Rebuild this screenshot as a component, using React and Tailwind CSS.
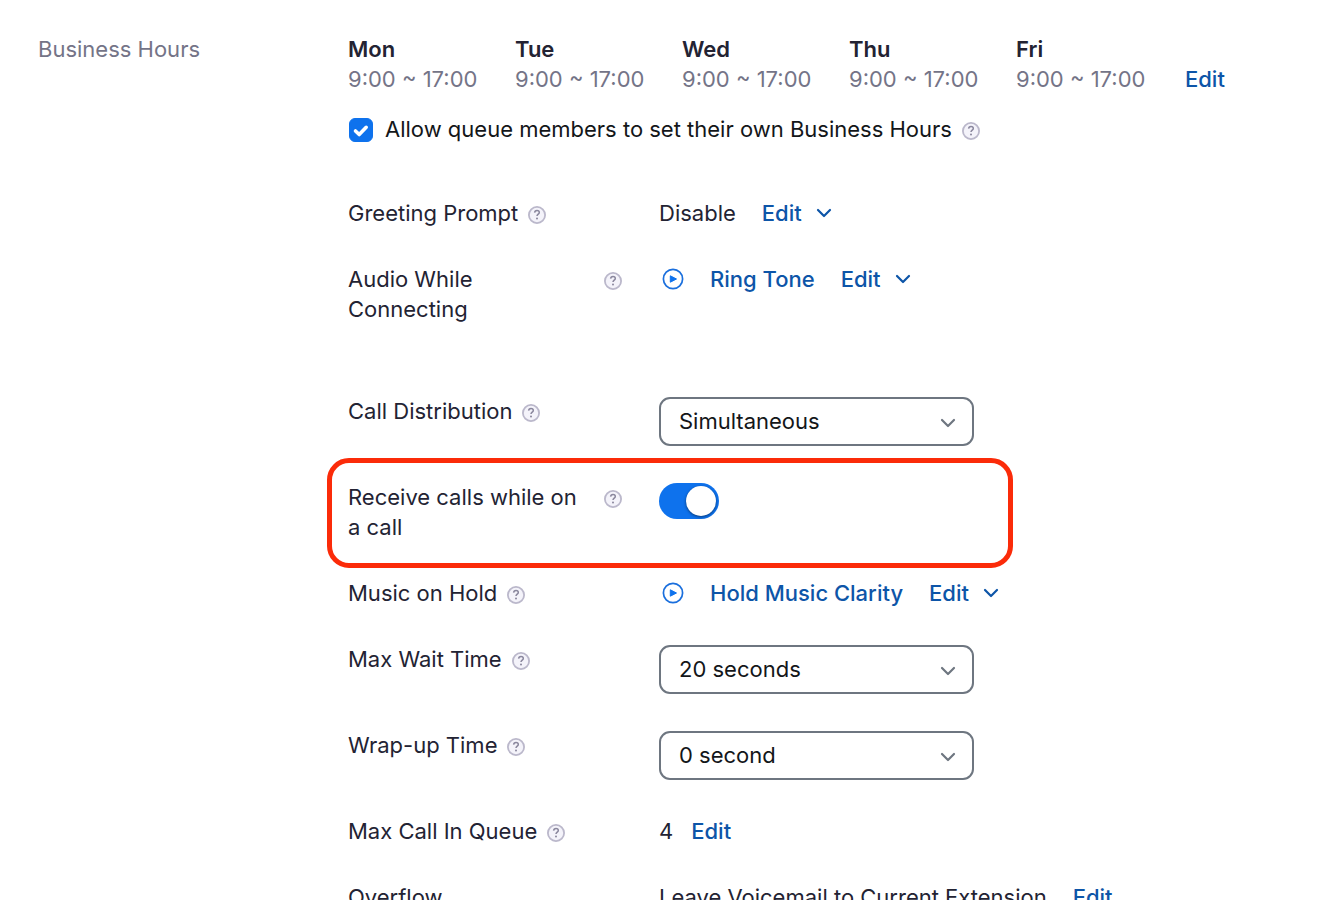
import { useId, useState } from "react";

const DAYS = ["Mon", "Tue", "Wed", "Thu", "Fri"];

function HelpIcon() {
  return (
    <button type="button" aria-label="Help" className="mt-2 h-[18px] w-[18px] shrink-0">
      <svg viewBox="0 0 18 18" className="block h-full w-full" fill="none">
        <circle cx="9" cy="9" r="8.1" fill="#f4f3fa" stroke="#bbb8cb" strokeWidth="1.8" />
        <path
          d="M6.6 6.6c.1-1.4 1.1-2.2 2.4-2.2 1.4 0 2.3.8 2.3 2 0 1.700-2.300 1.800-2.300 3.700"
          stroke="#8a879d"
          strokeWidth="1.5"
        />
        <circle cx="9" cy="12.6" r="1" fill="#8a879d" />
      </svg>
    </button>
  );
}

function Chevron({ className }) {
  return (
    <svg
      viewBox="0 0 16 10"
      className={className}
      fill="none"
      stroke="currentColor"
      strokeWidth="2.2"
      strokeLinecap="round"
      strokeLinejoin="round"
    >
      <path d="M2 2l6 6 6-6" />
    </svg>
  );
}

function PlayButton({ label }) {
  return (
    <button type="button" aria-label={`Play ${label}`} className="ml-[3px] mr-[26px] h-[22px] w-[22px] shrink-0">
      <svg viewBox="0 0 22 22" className="block h-full w-full" fill="none">
        <circle cx="11" cy="11" r="9.6" stroke="#1a6fdd" strokeWidth="1.7" />
        <path d="M8.3 7.8v6.4l6.2-3.2z" fill="#0e72ed" stroke="#0e72ed" strokeLinejoin="round" />
      </svg>
    </button>
  );
}

function EditMenu() {
  return (
    <button type="button" className="ml-[26px] flex items-center gap-[14px] font-medium text-[#0d55a8]">
      Edit
      <Chevron className="h-[10px] w-4" />
    </button>
  );
}

function Audio({ name }) {
  return (
    <div className="flex items-center">
      <PlayButton label={name} />
      <a href="#" className="font-medium text-[#0d55a8]">
        {name}
      </a>
      <EditMenu />
    </div>
  );
}

function Row({ label, htmlFor, help = true, className = "", children }) {
  return (
    <div className={`relative flex items-start ${className}`}>
      <div className="mr-[37px] flex w-[274px] shrink-0 items-start gap-[10px]">
        {htmlFor ? <label htmlFor={htmlFor}>{label}</label> : <span>{label}</span>}
        {help && <HelpIcon />}
      </div>
      {children}
    </div>
  );
}

function SelectRow({ label, options }) {
  const id = useId();

  return (
    <Row label={label} htmlFor={id}>
      <div className="relative mt-px w-[315px]">
        <select
          id={id}
          className="block h-[49px] w-full appearance-none rounded-[11px] border-2 border-[#6e7680] bg-white pb-0.5 pl-[18px] pr-12 text-[#131619]"
        >
          {options.map((option) => (
            <option key={option}>{option}</option>
          ))}
        </select>
        <Chevron className="pointer-events-none absolute right-[18px] top-[21px] h-[10px] w-4 text-[#6e7680]" />
      </div>
    </Row>
  );
}

function App() {
  const [allowOwnHours, setAllowOwnHours] = useState(true);
  const [receiveCalls, setReceiveCalls] = useState(true);

  return (
    <main className="flex h-screen items-start overflow-y-auto bg-white px-[38px] pt-[34px] font-['Inter',sans-serif] text-[22px] leading-[30px] text-[#232333] [scrollbar-width:none]">
      <h2 className="w-[310px] shrink-0 text-[#747487]">Business Hours</h2>

      <div className="min-w-0 flex-1">
        <div className="flex items-end gap-[34px]">
          {DAYS.map((day) => (
            <div key={day} className="w-[133px] whitespace-nowrap">
              <div className="font-semibold">{day}</div>
              <div className="text-[#747487]">9:00 ~ 17:00</div>
            </div>
          ))}
          <button type="button" className="pl-0.5 font-medium text-[#0d55a8]">
            Edit
          </button>
        </div>

        <div className="mt-5 flex items-start gap-[10px]">
          <label className="flex items-start gap-3 text-[#131619]">
            <span className="relative ml-px mt-1 h-6 w-6">
              <input
                type="checkbox"
                checked={allowOwnHours}
                onChange={(e) => setAllowOwnHours(e.target.checked)}
                className="block h-6 w-6 appearance-none rounded-md border border-[#6e7680] checked:border-[#0e72ed] checked:bg-[#0e72ed]"
              />
              <svg
                viewBox="0 0 24 24"
                className="pointer-events-none absolute inset-0"
                fill="none"
                stroke="white"
                strokeWidth="3.6"
                strokeLinecap="round"
                strokeLinejoin="round"
              >
                <path d="M6.5 13l3.7 3.5 7-7.2" />
              </svg>
            </span>
            Allow queue members to set their own Business Hours
          </label>
          <HelpIcon />
        </div>

        <div className="mt-[54px] flex flex-col gap-9 pb-9">
          <Row label="Greeting Prompt">
            <span>Disable</span>
            <EditMenu />
          </Row>
          <Row label="Audio While Connecting" className="mb-9">
            <Audio name="Ring Tone" />
          </Row>
          <SelectRow
            label="Call Distribution"
            options={["Simultaneous", "Sequential", "Rotating", "Longest Idle"]}
          />
          <Row label={"Receive calls while on a\u00a0call"} htmlFor="receive-calls">
            <input
              id="receive-calls"
              type="checkbox"
              role="switch"
              checked={receiveCalls}
              onChange={(e) => setReceiveCalls(e.target.checked)}
              className="mt-px flex h-9 w-[60px] appearance-none items-center rounded-full bg-[#98a0a9] p-[3px] before:h-[30px] before:w-[30px] before:rounded-full before:bg-white before:shadow-[0_1px_3px_rgba(0,0,0,0.5)] before:content-[''] checked:justify-end checked:bg-[#0e72ed]"
            />
            <div className="pointer-events-none absolute -bottom-[26px] -left-[21px] -top-6 w-[686px] rounded-[22px] border-5 border-[#fb2b09]" />
          </Row>
          <Row label="Music on Hold">
            <Audio name="Hold Music Clarity" />
          </Row>
          <SelectRow label="Max Wait Time" options={["20 seconds", "30 seconds", "60 seconds"]} />
          <SelectRow label="Wrap-up Time" options={["0 second", "10 seconds", "30 seconds"]} />
          <Row label="Max Call In Queue">
            <span>4</span>
            <button type="button" className="ml-[18px] font-medium text-[#0d55a8]">
              Edit
            </button>
          </Row>
          <Row label="Overflow" help={false}>
            <span>Leave Voicemail to Current Extension</span>
            <button type="button" className="ml-[26px] font-medium text-[#0d55a8]">
              Edit
            </button>
          </Row>
        </div>
      </div>
    </main>
  );
}

export default App;
